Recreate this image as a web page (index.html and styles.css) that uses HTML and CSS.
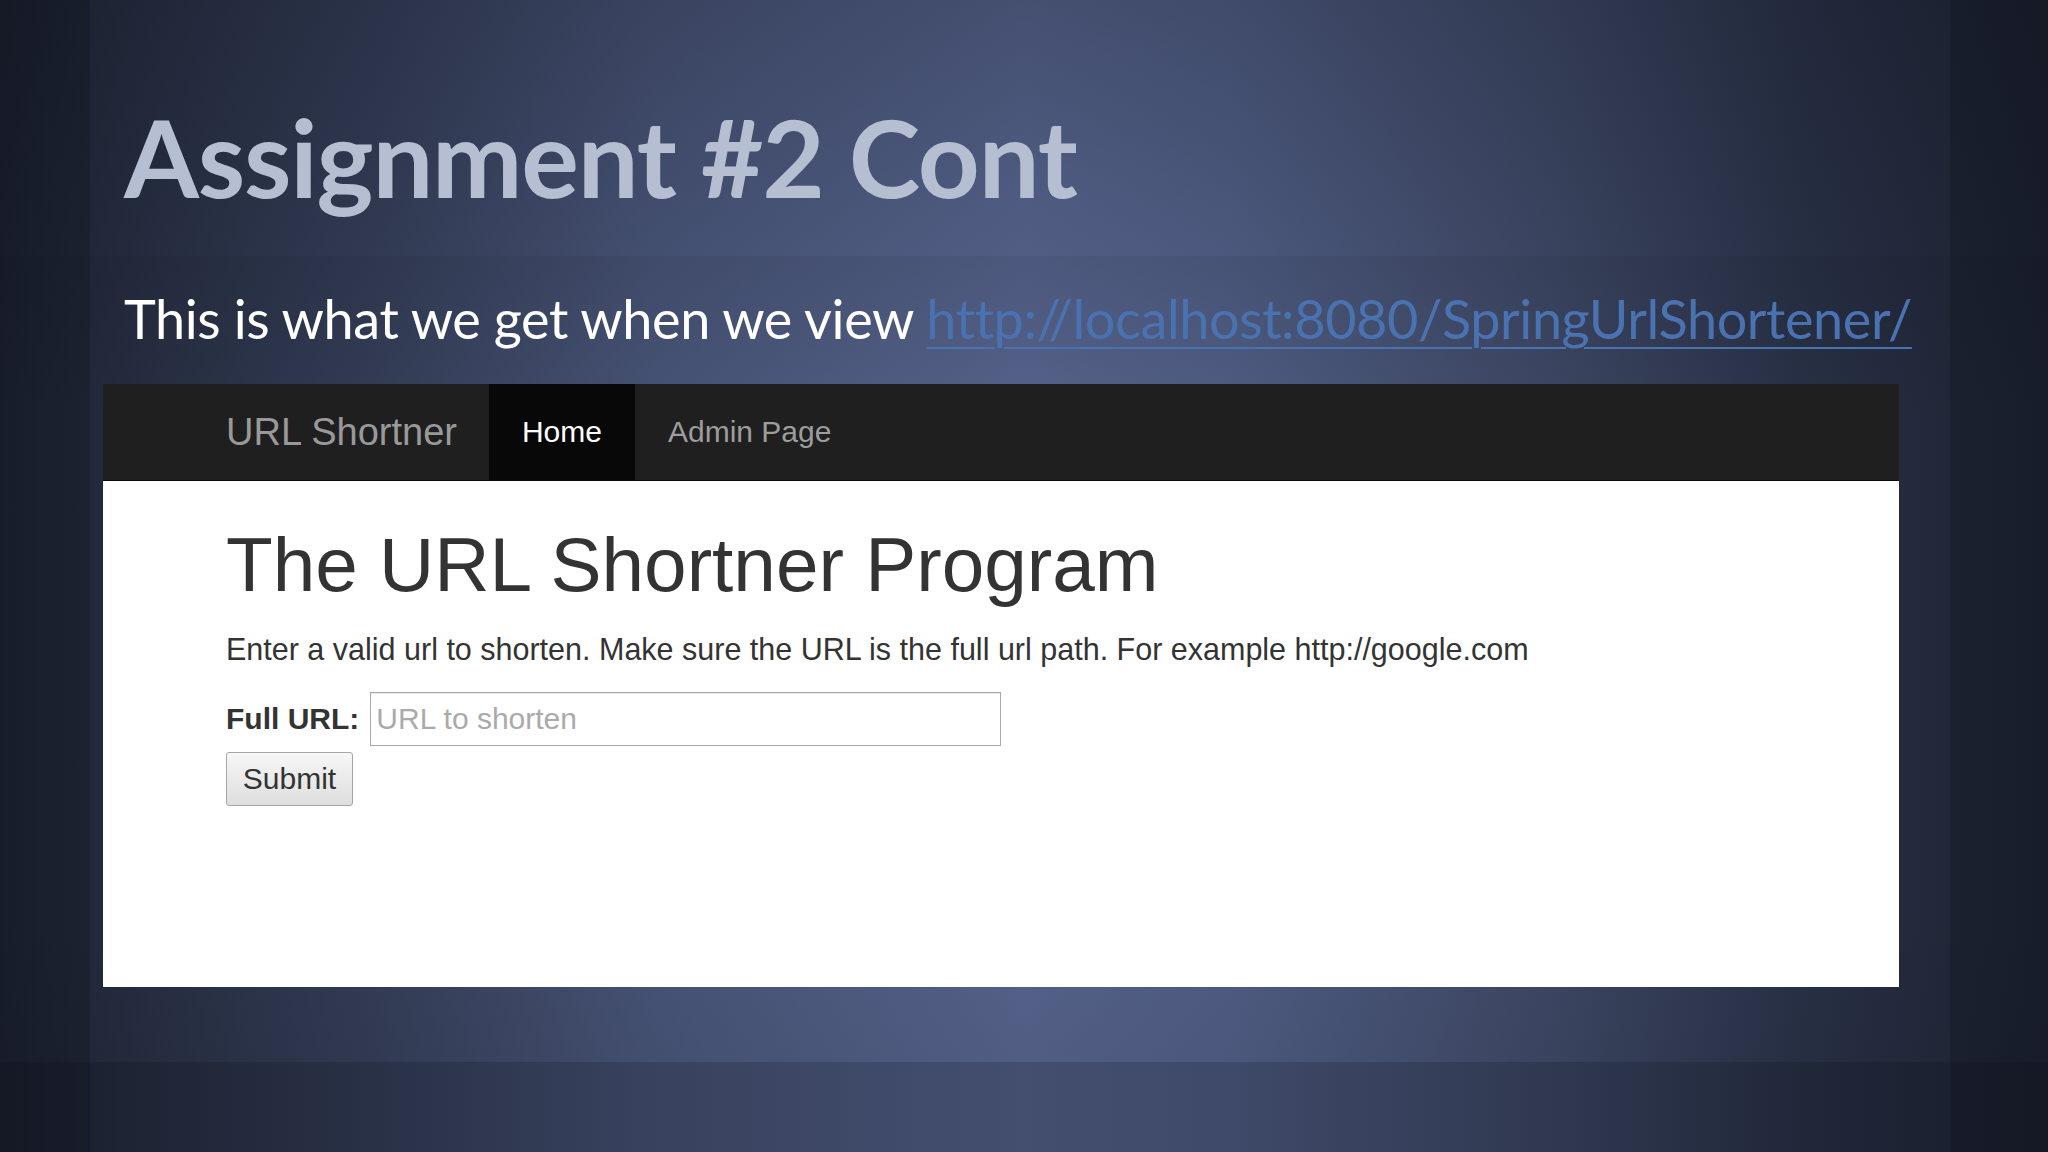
FILE: index.html
```html
<!DOCTYPE html>
<html lang="en">
<head>
<meta charset="utf-8">
<title>Assignment #2 Cont</title>
<link rel="stylesheet" href="styles.css">
</head>
<body>
<main class="slide">
  <h1 class="slide-title">Assignment #2 Cont</h1>
  <p class="slide-text">This is what we get when we view <a class="slide-link" href="#">http://localhost:8080/SpringUrlShortener/</a></p>
  <section class="browser">
    <nav class="navbar">
      <span class="brand">URL Shortner</span>
      <span class="nav-item active">Home</span>
      <span class="nav-item">Admin Page</span>
    </nav>
    <div class="page">
      <h2 class="page-title">The URL Shortner Program</h2>
      <p class="page-text">Enter a valid url to shorten. Make sure the URL is the full url path. For example http://google.com</p>
      <form class="url-form">
        <div class="form-row">
          <label class="form-label">Full URL:</label>
          <input class="form-input" type="text" placeholder="URL to shorten">
        </div>
        <button class="submit-btn" type="button">Submit</button>
      </form>
    </div>
  </section>
</main>
</body>
</html>
```

FILE: styles.css
```css
html, body {
  margin: 0;
  padding: 0;
}
body {
  width: 2048px;
  height: 1152px;
  overflow: hidden;
  background:
    linear-gradient(to right, rgba(8,10,18,0.22) 0, rgba(8,10,18,0.22) 90px, transparent 90px, transparent 1950px, rgba(8,10,18,0.22) 1950px),
    linear-gradient(to bottom, transparent 0, transparent 1062px, rgba(5,8,16,0.22) 1062px),
    linear-gradient(to bottom, rgba(10,14,24,0.22) 0, rgba(10,14,24,0.05) 256px, rgba(10,14,24,0.12) 256px, transparent 420px, transparent 900px, rgba(10,14,24,0.06) 1062px, transparent 1062px),
    linear-gradient(to right, #1d2231 0%, #262d40 7%, #333c55 18%, #475375 32%, #55628a 50%, #4f5c82 60%, #3c4662 76%, #283045 88%, #1d2231 100%);
  background-color: #1e2331;
}
.slide {
  display: flex;
  flex-direction: column;
}
.slide-title {
  margin: 102px 0 0 124px;
  font-family: Lato, "Open Sans", sans-serif;
  font-weight: 700;
  font-size: 108px;
  line-height: 1;
  color: #b5bfd1;
  letter-spacing: -1.2px;
}
.slide-text {
  margin: 82px 0 0 124px;
  font-family: Lato, "Open Sans", sans-serif;
  font-size: 54px;
  line-height: 1;
  color: #ffffff;
  letter-spacing: -0.4px;
}
.slide-link {
  color: #4a72b0;
  text-decoration: underline;
  text-decoration-thickness: 2px;
  text-underline-offset: 8px;
}
.browser {
  margin: 38px 0 0 103px;
  width: 1796px;
  display: flex;
  flex-direction: column;
  font-family: "Liberation Sans", Arial, sans-serif;
}
.navbar {
  height: 96px;
  background: #1f1f20;
  border-bottom: 1px solid #080808;
  display: flex;
  align-items: stretch;
  padding-left: 123px;
}
.brand {
  display: flex;
  align-items: center;
  font-size: 38px;
  color: #999999;
  padding-right: 32px;
}
.nav-item {
  display: flex;
  align-items: center;
  padding: 0 33px;
  font-size: 30px;
  color: #9d9d9d;
}
.nav-item.active {
  background: #080808;
  color: #ffffff;
}
.page {
  height: 506px;
  background: #ffffff;
  padding-left: 123px;
  display: flex;
  flex-direction: column;
  align-items: flex-start;
  color: #333333;
}
.page-title {
  margin: 42px 0 21px;
  font-size: 76.5px;
  font-weight: 400;
  line-height: 1.1;
  color: #333333;
}
.page-text {
  margin: 0 0 21px;
  font-size: 30.5px;
  line-height: 43px;
}
.url-form {
  display: flex;
  flex-direction: column;
  align-items: flex-start;
  gap: 6px;
}
.form-row {
  display: flex;
  align-items: center;
  gap: 11px;
}
.form-label {
  font-size: 30px;
  font-weight: 700;
  color: #333;
}
.form-input {
  width: 631px;
  height: 54px;
  box-sizing: border-box;
  border: 1px solid #a9a9a9;
  box-shadow: inset 0 1px 1px rgba(0,0,0,0.1);
  padding: 0 5px;
  font-family: "Liberation Sans", Arial, sans-serif;
  font-size: 30px;
  color: #333;
  background: #fff;
}
.form-input::placeholder {
  color: #aaaaaa;
}
.submit-btn {
  width: 127px;
  height: 54px;
  box-sizing: border-box;
  border: 1px solid #a6a6a6;
  border-radius: 3px;
  background: linear-gradient(to bottom, #f7f7f7, #dedede);
  font-family: "Liberation Sans", Arial, sans-serif;
  font-size: 30px;
  color: #333;
  padding: 0;
}
```
